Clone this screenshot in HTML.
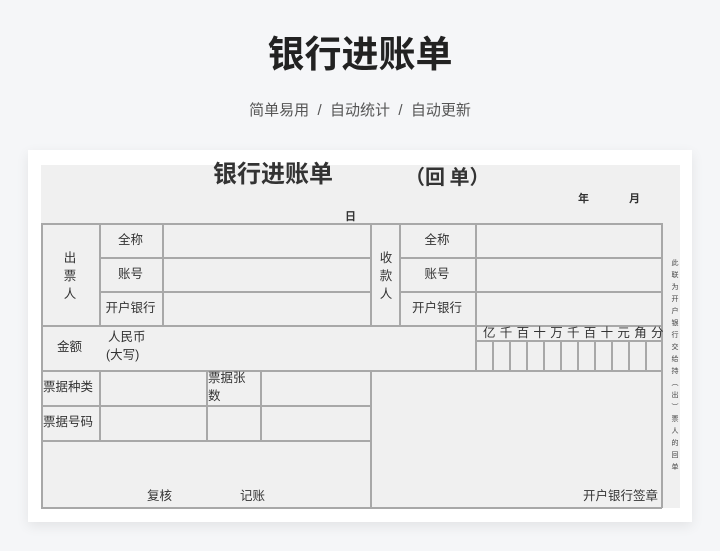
<!DOCTYPE html>
<html><head><meta charset="utf-8"><style>
*{margin:0;padding:0;box-sizing:border-box}
body{width:720px;height:551px;background:#f5f6f8;font-family:"Liberation Sans","Noto Sans CJK SC",sans-serif;position:relative;overflow:hidden}
.a{position:absolute;white-space:nowrap}
.h{left:0;width:720px;text-align:center}
.card{position:absolute;left:28px;top:150px;width:664px;height:372px;background:#fff;box-shadow:0 4px 12px rgba(0,0,0,.08)}
.in{position:absolute;left:41px;top:165px;width:639px;height:343px;background:#f0f0f0}
.hl{position:absolute;height:1.5px;background:#a8a8a8}
.vl{position:absolute;width:1.5px;background:#a8a8a8}
.t{position:absolute;font-size:12.5px;color:#333;white-space:nowrap;line-height:1}
.c{text-align:center}
</style></head><body>
<div class="a h" style="top:30px;font-size:37px;font-weight:bold;color:#222;line-height:50px">银行进账单</div>
<div class="a h" style="top:101px;font-size:15px;color:#555;line-height:20px">简单易用 &nbsp;/ &nbsp;自动统计 &nbsp;/ &nbsp;自动更新</div>
<div class="card"></div>
<div class="in"></div>
<div class="t" style="left:213px;top:163px;font-size:24px;font-weight:bold;color:#333">银行进账单</div>
<div class="t" style="left:405px;top:166px;font-size:20px;font-weight:bold;color:#333;font-family:'Noto Sans CJK SC',sans-serif">（回&nbsp;单）</div>
<div class="t" style="left:578px;top:194px;font-size:11px;font-weight:bold">年</div>
<div class="t" style="left:629px;top:194px;font-size:11px;font-weight:bold">月</div>
<div class="t" style="left:345px;top:212px;font-size:11px;font-weight:bold">日</div>
<div class="hl" style="left:41px;top:223px;width:621px"></div>
<div class="hl" style="left:99px;top:257px;width:272px"></div>
<div class="hl" style="left:399px;top:257px;width:263px"></div>
<div class="hl" style="left:99px;top:291px;width:272px"></div>
<div class="hl" style="left:399px;top:291px;width:263px"></div>
<div class="hl" style="left:41px;top:325px;width:621px"></div>
<div class="hl" style="left:475px;top:340px;width:187px"></div>
<div class="hl" style="left:41px;top:370px;width:621px"></div>
<div class="hl" style="left:41px;top:405px;width:330px"></div>
<div class="hl" style="left:41px;top:440px;width:330px"></div>
<div class="hl" style="left:41px;top:507px;width:621px"></div>
<div class="vl" style="left:41px;top:223px;height:285px"></div>
<div class="vl" style="left:99px;top:223px;height:103px"></div>
<div class="vl" style="left:162px;top:223px;height:103px"></div>
<div class="vl" style="left:370px;top:223px;height:103px"></div>
<div class="vl" style="left:399px;top:223px;height:103px"></div>
<div class="vl" style="left:475px;top:223px;height:148px"></div>
<div class="vl" style="left:661px;top:223px;height:285px"></div>
<div class="vl" style="left:99px;top:370px;height:71px"></div>
<div class="vl" style="left:206px;top:370px;height:71px"></div>
<div class="vl" style="left:260px;top:370px;height:71px"></div>
<div class="vl" style="left:370px;top:370px;height:138px"></div>
<div class="vl" style="left:492px;top:340px;height:31px"></div>
<div class="vl" style="left:509px;top:340px;height:31px"></div>
<div class="vl" style="left:526px;top:340px;height:31px"></div>
<div class="vl" style="left:543px;top:340px;height:31px"></div>
<div class="vl" style="left:560px;top:340px;height:31px"></div>
<div class="vl" style="left:577px;top:340px;height:31px"></div>
<div class="vl" style="left:594px;top:340px;height:31px"></div>
<div class="vl" style="left:611px;top:340px;height:31px"></div>
<div class="vl" style="left:628px;top:340px;height:31px"></div>
<div class="vl" style="left:645px;top:340px;height:31px"></div>
<div class="t c" style="left:62px;top:249px;width:16px;line-height:18px;white-space:normal">出<br>票<br>人</div>
<div class="t c" style="left:378px;top:249px;width:16px;line-height:18px;white-space:normal">收<br>款<br>人</div>
<div class="t c" style="left:99px;top:234px;width:63px">全称</div>
<div class="t c" style="left:99px;top:268px;width:63px">账号</div>
<div class="t c" style="left:99px;top:302px;width:63px">开户银行</div>
<div class="t c" style="left:399px;top:234px;width:76px">全称</div>
<div class="t c" style="left:399px;top:268px;width:76px">账号</div>
<div class="t c" style="left:399px;top:302px;width:76px">开户银行</div>
<div class="t" style="left:483px;top:327px;letter-spacing:4.3px">亿千百十万千百十元角分</div>
<div class="t" style="left:57px;top:341px">金额</div>
<div class="t" style="left:108px;top:331px">人民币</div>
<div class="t" style="left:106px;top:349px">(大写)</div>
<div class="t" style="left:43px;top:381px">票据种类</div>
<div class="t" style="left:208px;top:372px">票据张</div>
<div class="t" style="left:208px;top:390px">数</div>
<div class="t" style="left:43px;top:416px">票据号码</div>
<div class="t" style="left:147px;top:490px">复核</div>
<div class="t" style="left:240px;top:490px">记账</div>
<div class="t" style="left:583px;top:490px">开户银行签章</div>
<div class="t c" style="left:669px;top:258px;width:12px;font-size:7px;line-height:12px;white-space:normal;color:#444">此<br>联<br>为<br>开<br>户<br>银<br>行<br>交<br>给<br>持<br>︵<br>出<br>︶<br>票<br>人<br>的<br>回<br>单</div>
</body></html>
